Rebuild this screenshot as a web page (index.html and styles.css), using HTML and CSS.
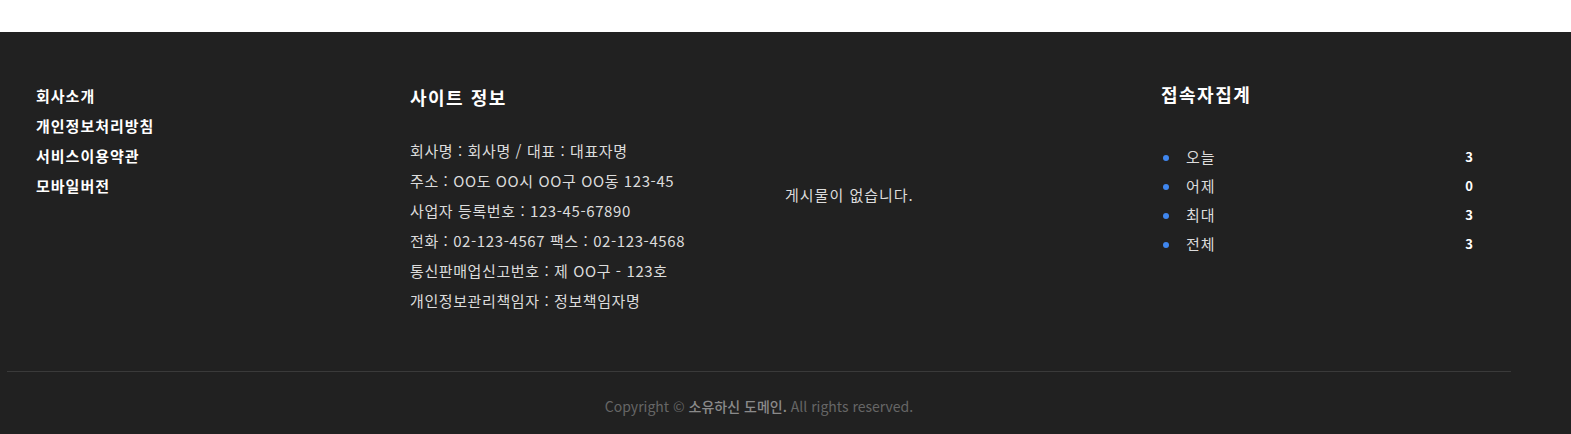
FILE: index.html
```html
<!DOCTYPE html>
<html lang="ko">
<head>
    <meta charset="UTF-8">
    <title>Footer</title>

    <link rel="stylesheet" href="styles.css">
</head>
<body>

    <div class="topbar"></div>

    <footer id="footer">
        <div class="footer-inner">
            <div class="footer-cols">

                <ul class="col link-list">
                    <li><a href="#">회사소개</a></li>
                    <li><a href="#">개인정보처리방침</a></li>
                    <li><a href="#">서비스이용약관</a></li>
                    <li><a href="#">모바일버전</a></li>
                </ul>

                <div class="col site-info">
                    <h3>사이트 정보</h3>
                    <p>회사명 : 회사명 / 대표 : 대표자명</p>
                    <p>주소 : OO도 OO시 OO구 OO동 123-45</p>
                    <p>사업자 등록번호 : 123-45-67890</p>
                    <p>전화 : 02-123-4567 팩스 : 02-123-4568</p>
                    <p>통신판매업신고번호 : 제 OO구 - 123호</p>
                    <p>개인정보관리책임자 : 정보책임자명</p>
                </div>

                <div class="col latest">
                    <p class="empty">게시물이 없습니다.</p>
                </div>

                <div class="col visit">
                    <h3>접속자집계</h3>
                    <ul>
                        <li><span class="label">오늘</span><strong>3</strong></li>
                        <li><span class="label">어제</span><strong>0</strong></li>
                        <li><span class="label">최대</span><strong>3</strong></li>
                        <li><span class="label">전체</span><strong>3</strong></li>
                    </ul>
                </div>

            </div>

            <div class="copyright">
                Copyright &copy; <b>소유하신 도메인.</b> All rights reserved.
            </div>
        </div>
    </footer>

</body>
</html>
```

FILE: styles.css
```css
body {
    margin: 0;
    padding: 0;
    background: #fff;
    font-family: "Noto Sans CJK KR", "Noto Sans", sans-serif;
}

.topbar {
    height: 32px;
    background: #fff;
}

#footer {
    background: #212121;
    height: 402px;
    overflow: hidden;
    color: #dcdcdc;
}

.footer-inner {
    margin-left: 7px;
    width: 1504px;
}

.footer-cols {
    display: grid;
    grid-template-columns: 374px 375px 376px 1fr;
    padding: 49px 0 55px 29px;
    align-items: start;
}

.col {
    margin: 0;
}

/* links */
.link-list {
    list-style: none;
    padding: 0;
}

.link-list li {
    line-height: 30px;
    font-size: 15px;
    font-weight: bold;
    letter-spacing: 1px;
}

.link-list a {
    color: #fff;
    text-decoration: none;
}

/* site info */
.site-info h3 {
    margin: 1px 0 24px;
    font-size: 18px;
    line-height: 30px;
    letter-spacing: 1.5px;
    color: #fff;
}

.site-info p {
    margin: 0;
    font-size: 15px;
    line-height: 30px;
    letter-spacing: 0.6px;
}

/* latest posts */
.latest .empty {
    margin: 0;
    padding-top: 99px;
    font-size: 15px;
    line-height: 30px;
    letter-spacing: 1px;
}

/* visitor counter */
.visit {
    padding-right: 38px;
}

.visit h3 {
    margin: 0;
    font-size: 18px;
    line-height: 26px;
    letter-spacing: 1.5px;
    color: #fff;
}

.visit ul {
    list-style: none;
    margin: 35px 0 0;
    padding: 0;
}

.visit li {
    display: flex;
    align-items: center;
    height: 29px;
    font-size: 15px;
    letter-spacing: 1px;
}

.visit li::before {
    content: "";
    width: 6px;
    height: 6px;
    border-radius: 50%;
    background: #3f86ee;
    margin: 2px 17px 0 2px;
}

.visit .label {
    flex: 1;
}

.visit strong {
    font-size: 13px;
    letter-spacing: 0;
    color: #fff;
}

/* copyright */
.copyright {
    border-top: 1px solid #3a3a3a;
    padding: 24px 0;
    text-align: center;
    font-size: 14px;
    line-height: 20px;
    color: #666;
}

.copyright b {
    font-weight: 500;
    color: #8a8a8a;
}
```
